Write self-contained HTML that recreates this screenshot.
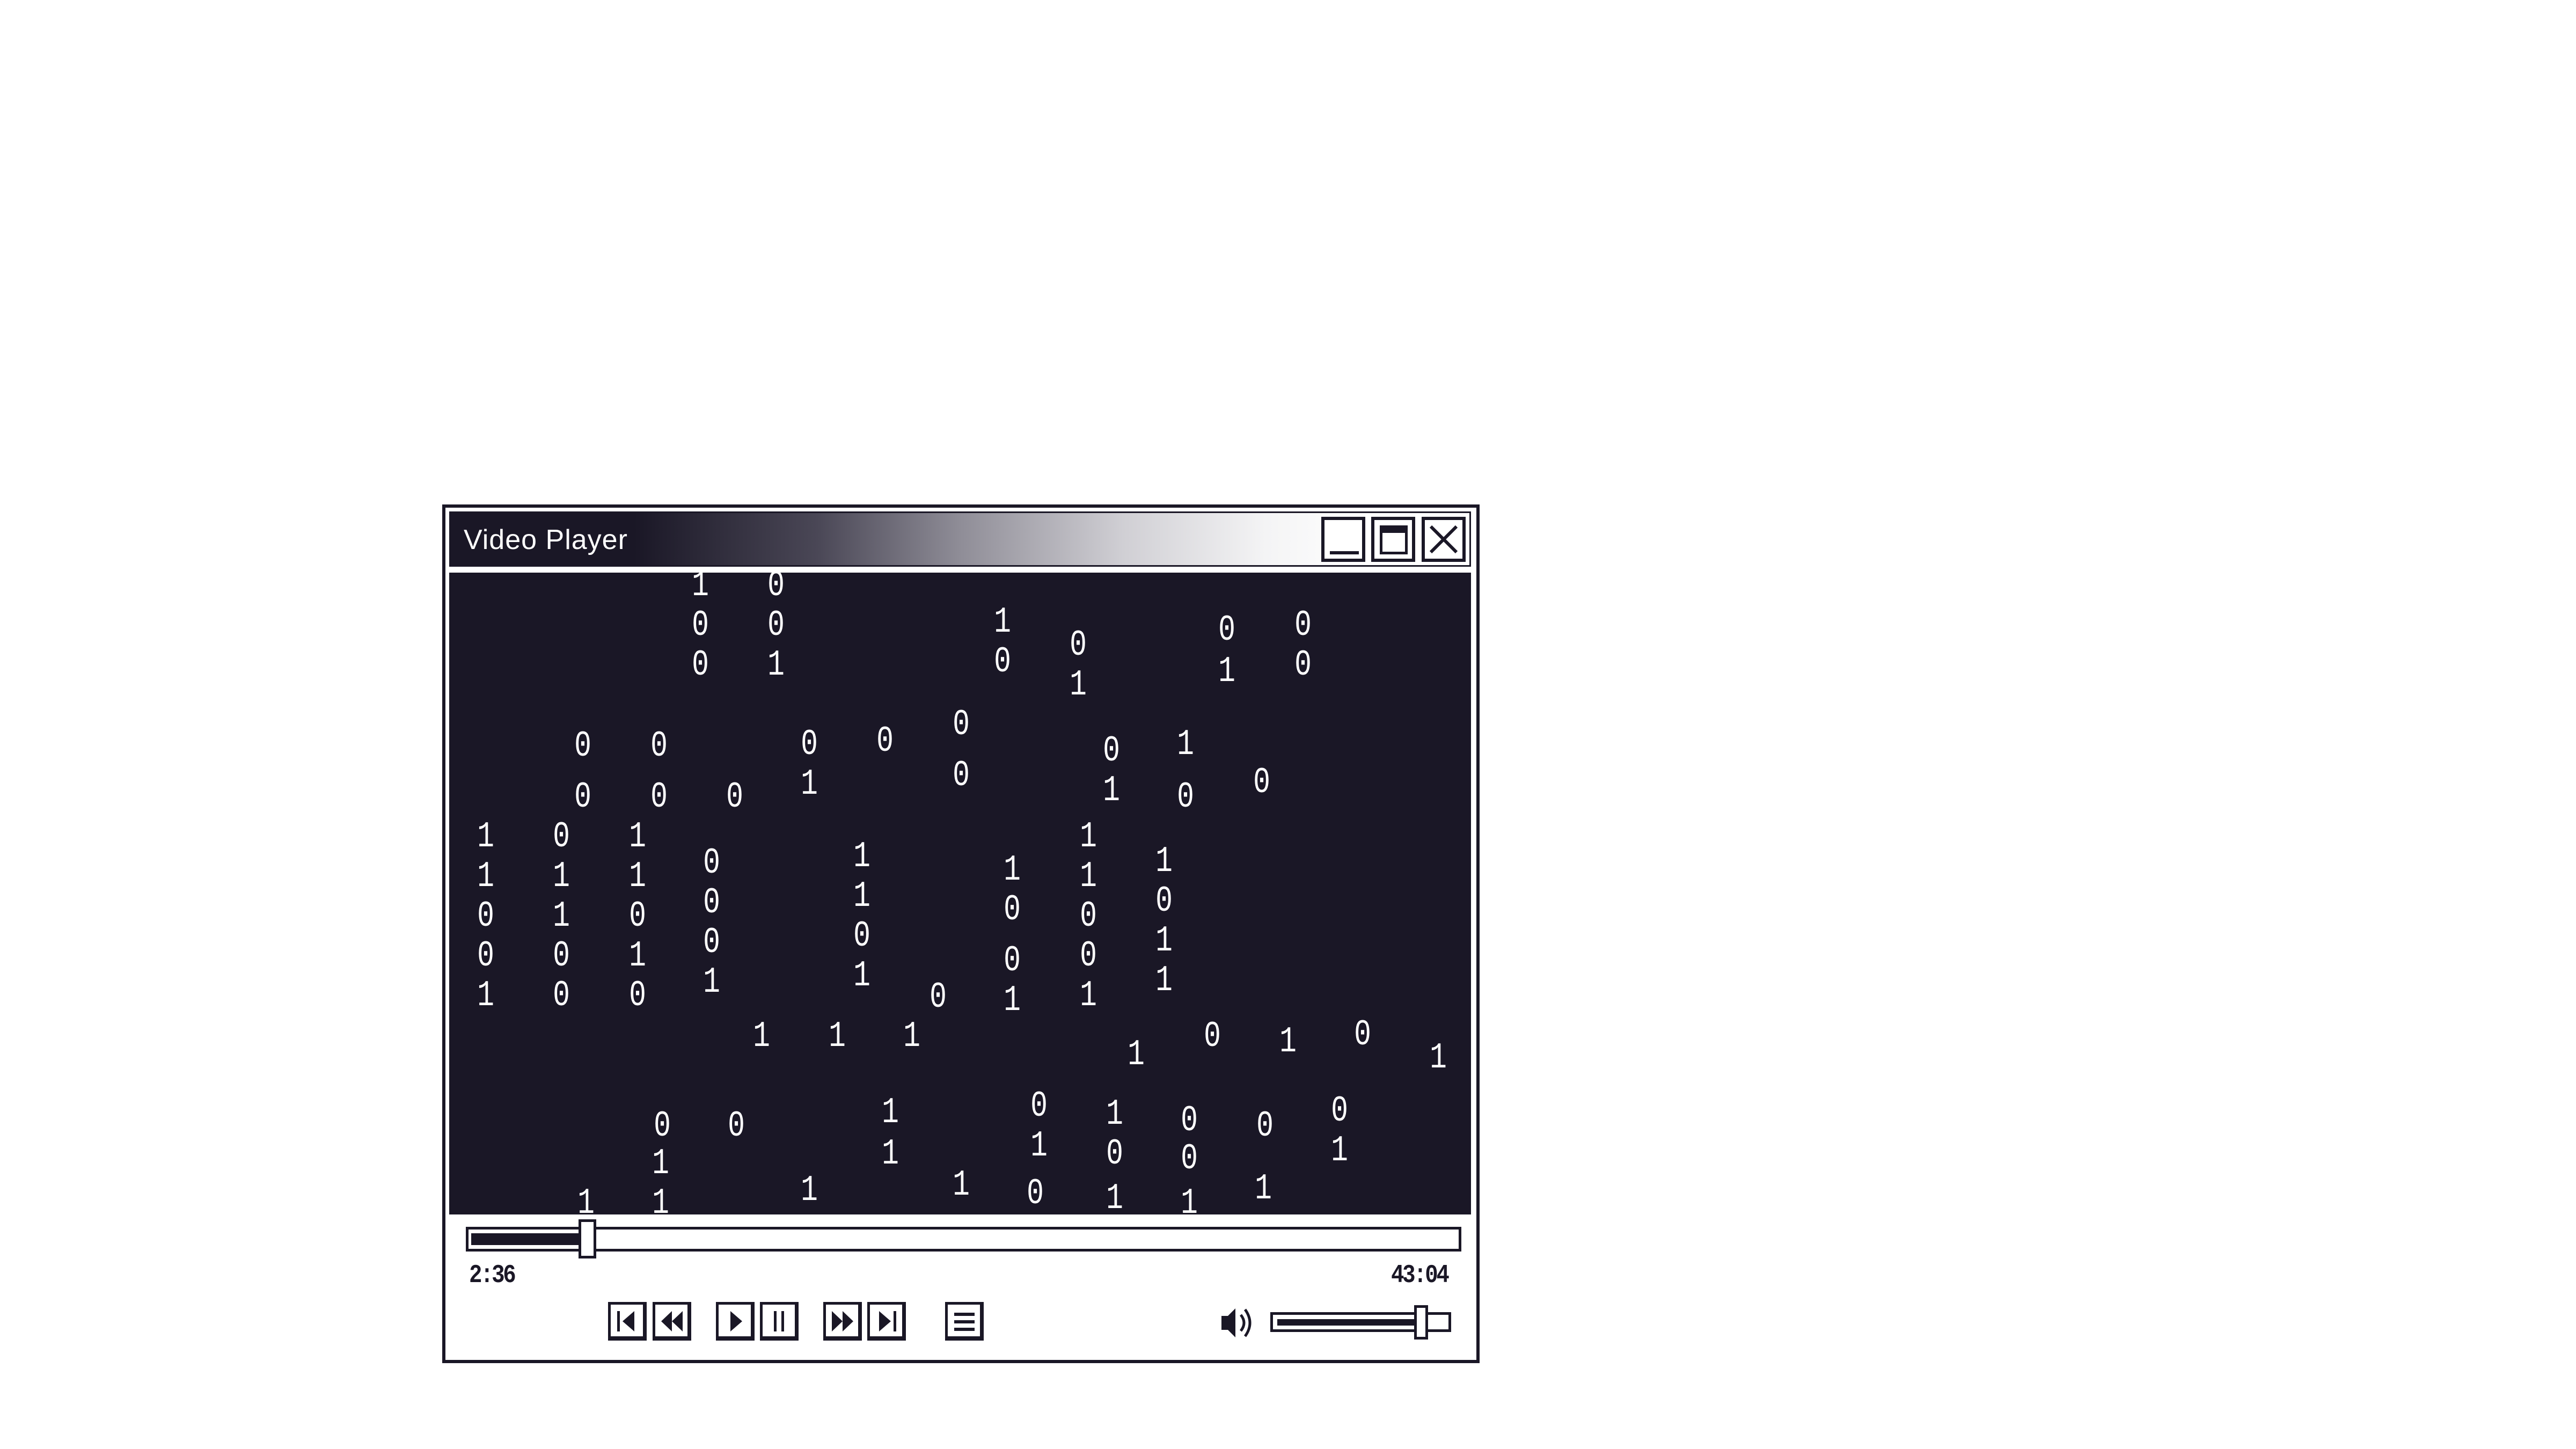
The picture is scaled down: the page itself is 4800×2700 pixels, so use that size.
<!DOCTYPE html>
<html><head><meta charset="utf-8"><style>
*{margin:0;padding:0;box-sizing:border-box}
html,body{width:4800px;height:2700px;background:#fff;overflow:hidden;font-family:"Liberation Mono",monospace;color:#1a1726}
.abs{position:absolute}
#win{left:824px;top:940px;width:1933px;height:1600px;border:6px solid #1a1726;background:#fff}
#title{left:837px;top:953px;width:1904px;height:103px;border:3px solid #1a1726;
background:linear-gradient(90deg,#1a1726 0%,#1a1726 18%,#4a4756 36%,#8f8d97 50%,#d0cfd4 66%,#f4f4f5 80%,#fff 90%)}
#title span{position:absolute;left:24px;top:20px;font-family:"Liberation Sans",sans-serif;font-size:52px;color:#fff;letter-spacing:1px}
.tb{top:963px;width:82px;height:84px;background:#fff;border:6px solid #1a1726}
#video{left:837px;top:1067px;width:1904px;height:1196px;background:#1a1726;overflow:hidden}
.d{position:absolute;transform:translate(-50%,-50%) scaleX(0.78);color:#fff;font-size:68px;line-height:1;left:calc(var(--x)*3.077px - 843px);top:calc(var(--y)*3.077px - 1070px)}
#prog{left:868px;top:2286px;width:1855px;height:46px;border:5px solid #1a1726;background:#fff}
#pfill{left:878px;top:2298px;width:205px;height:22px;background:#1a1726}
#thumb{left:1078px;top:2272px;width:33px;height:73px;border:5px solid #1a1726;background:#fff}
.time{top:2350px;font-size:48px;color:#1a1726;letter-spacing:-4px;font-weight:bold;transform:scaleX(0.85);transform-origin:left}
.btn{top:2426px;width:72px;height:72px;border:5px solid #1a1726;border-bottom-width:8px;border-right-width:7px;background:#fff}
.btn svg{position:absolute;left:0;top:0}
</style></head><body>
<div id="win" class="abs"></div>
<div id="title" class="abs"><span>Video Player</span></div>
<div class="abs tb" style="left:2462px"><div class="abs" style="left:10px;top:58px;width:54px;height:6px;background:#1a1726"></div></div>
<div class="abs tb" style="left:2555px"><div class="abs" style="left:10px;top:10px;width:52px;height:54px;border:5px solid #1a1726;border-top-width:14px"></div></div>
<div class="abs tb" style="left:2649px"><svg width="70" height="72" viewBox="0 0 70 72"><path d="M11 12L59 60M59 12L11 60" stroke="#1a1726" stroke-width="6"/></svg></div>
<div id="video" class="abs">
<span class="d" style="--x:426;--y:356">1</span><span class="d" style="--x:426;--y:380">0</span><span class="d" style="--x:426;--y:404">0</span>
<span class="d" style="--x:472;--y:356">0</span><span class="d" style="--x:472;--y:380">0</span><span class="d" style="--x:472;--y:404">1</span>
<span class="d" style="--x:609;--y:378">1</span><span class="d" style="--x:609;--y:402">0</span>
<span class="d" style="--x:655;--y:392">0</span><span class="d" style="--x:655;--y:416">1</span>
<span class="d" style="--x:745;--y:383">0</span><span class="d" style="--x:745;--y:408">1</span>
<span class="d" style="--x:791;--y:380">0</span><span class="d" style="--x:791;--y:404">0</span>
<span class="d" style="--x:355;--y:453">0</span><span class="d" style="--x:355;--y:484">0</span>
<span class="d" style="--x:401;--y:453">0</span><span class="d" style="--x:401;--y:484">0</span>
<span class="d" style="--x:447;--y:484">0</span>
<span class="d" style="--x:492;--y:452">0</span><span class="d" style="--x:492;--y:476">1</span>
<span class="d" style="--x:538;--y:450">0</span>
<span class="d" style="--x:584;--y:440">0</span><span class="d" style="--x:584;--y:471">0</span>
<span class="d" style="--x:675;--y:456">0</span><span class="d" style="--x:675;--y:480">1</span>
<span class="d" style="--x:720;--y:452">1</span><span class="d" style="--x:720;--y:484">0</span>
<span class="d" style="--x:766;--y:475">0</span>
<span class="d" style="--x:296;--y:508">1</span><span class="d" style="--x:296;--y:532">1</span><span class="d" style="--x:296;--y:556">0</span><span class="d" style="--x:296;--y:580">0</span><span class="d" style="--x:296;--y:604">1</span>
<span class="d" style="--x:342;--y:508">0</span><span class="d" style="--x:342;--y:532">1</span><span class="d" style="--x:342;--y:556">1</span><span class="d" style="--x:342;--y:580">0</span><span class="d" style="--x:342;--y:604">0</span>
<span class="d" style="--x:388;--y:508">1</span><span class="d" style="--x:388;--y:532">1</span><span class="d" style="--x:388;--y:556">0</span><span class="d" style="--x:388;--y:580">1</span><span class="d" style="--x:388;--y:604">0</span>
<span class="d" style="--x:433;--y:524">0</span><span class="d" style="--x:433;--y:548">0</span><span class="d" style="--x:433;--y:572">0</span><span class="d" style="--x:433;--y:596">1</span>
<span class="d" style="--x:524;--y:520">1</span><span class="d" style="--x:524;--y:544">1</span><span class="d" style="--x:524;--y:568">0</span><span class="d" style="--x:524;--y:592">1</span>
<span class="d" style="--x:570;--y:605">0</span>
<span class="d" style="--x:615;--y:528">1</span><span class="d" style="--x:615;--y:552">0</span><span class="d" style="--x:615;--y:583">0</span><span class="d" style="--x:615;--y:607">1</span>
<span class="d" style="--x:661;--y:508">1</span><span class="d" style="--x:661;--y:532">1</span><span class="d" style="--x:661;--y:556">0</span><span class="d" style="--x:661;--y:580">0</span><span class="d" style="--x:661;--y:604">1</span>
<span class="d" style="--x:707;--y:523">1</span><span class="d" style="--x:707;--y:547">0</span><span class="d" style="--x:707;--y:571">1</span><span class="d" style="--x:707;--y:595">1</span>
<span class="d" style="--x:463;--y:629">1</span><span class="d" style="--x:509;--y:629">1</span><span class="d" style="--x:554;--y:629">1</span>
<span class="d" style="--x:690;--y:640">1</span><span class="d" style="--x:736;--y:629">0</span><span class="d" style="--x:782;--y:632">1</span><span class="d" style="--x:827;--y:628">0</span><span class="d" style="--x:873;--y:642">1</span>
<span class="d" style="--x:403;--y:683">0</span><span class="d" style="--x:448;--y:683">0</span>
<span class="d" style="--x:541;--y:675">1</span><span class="d" style="--x:541;--y:700">1</span>
<span class="d" style="--x:631;--y:671">0</span><span class="d" style="--x:631;--y:695">1</span><span class="d" style="--x:629;--y:724">0</span>
<span class="d" style="--x:677;--y:676">1</span><span class="d" style="--x:677;--y:700">0</span><span class="d" style="--x:677;--y:727">1</span>
<span class="d" style="--x:722;--y:680">0</span><span class="d" style="--x:722;--y:703">0</span><span class="d" style="--x:722;--y:730">1</span>
<span class="d" style="--x:768;--y:683">0</span><span class="d" style="--x:767;--y:721">1</span>
<span class="d" style="--x:813;--y:674">0</span><span class="d" style="--x:813;--y:698">1</span>
<span class="d" style="--x:492;--y:722">1</span><span class="d" style="--x:584;--y:719">1</span>
<span class="d" style="--x:357;--y:730">1</span><span class="d" style="--x:402;--y:730">1</span><span class="d" style="--x:402;--y:706">1</span>
</div>
<div id="prog" class="abs"></div>
<div id="pfill" class="abs"></div>
<div id="thumb" class="abs"></div>
<div class="abs time" style="left:874px">2:36</div>
<div class="abs time" style="left:2592px">43:04</div>
<div class="abs btn" style="left:1133px"><svg width="62" height="62"><rect x="12" y="12" width="5" height="38" fill="#1a1726"/><path d="M44 12L22 31L44 50Z" fill="#1a1726"/></svg></div>
<div class="abs btn" style="left:1216px"><svg width="62" height="62"><path d="M31 12L11 31L31 50ZM51 12L31 31L51 50Z" fill="#1a1726"/></svg></div>
<div class="abs btn" style="left:1334px"><svg width="62" height="62"><path d="M22 12L44 31L22 50Z" fill="#1a1726"/></svg></div>
<div class="abs btn" style="left:1416px"><svg width="62" height="62"><rect x="21" y="12" width="5" height="38" fill="#1a1726"/><rect x="35" y="12" width="5" height="38" fill="#1a1726"/></svg></div>
<div class="abs btn" style="left:1534px"><svg width="62" height="62"><path d="M11 12L31 31L11 50ZM31 12L51 31L31 50Z" fill="#1a1726"/></svg></div>
<div class="abs btn" style="left:1616px"><svg width="62" height="62"><path d="M17 12L39 31L17 50Z" fill="#1a1726"/><rect x="44" y="12" width="5" height="38" fill="#1a1726"/></svg></div>
<div class="abs btn" style="left:1761px"><svg width="62" height="62"><rect x="12" y="15" width="38" height="6" fill="#1a1726"/><rect x="12" y="29" width="38" height="6" fill="#1a1726"/><rect x="12" y="43" width="38" height="6" fill="#1a1726"/></svg></div>
<svg class="abs" style="left:2272px;top:2430px" width="72" height="70" viewBox="0 0 72 70"><path d="M4 22H16L30 8V62L16 48H4Z" fill="#1a1726"/><path d="M40 20Q52 35 40 50" stroke="#1a1726" stroke-width="5" fill="none"/><path d="M48 10Q66 35 48 60" stroke="#1a1726" stroke-width="5" fill="none"/></svg>
<div class="abs" style="left:2367px;top:2445px;width:337px;height:37px;border:5px solid #1a1726;background:#fff"></div>
<div class="abs" style="left:2380px;top:2458px;width:262px;height:12px;background:#1a1726"></div>
<div class="abs" style="left:2635px;top:2432px;width:26px;height:64px;border:5px solid #1a1726;background:#fff"></div>
</body></html>
